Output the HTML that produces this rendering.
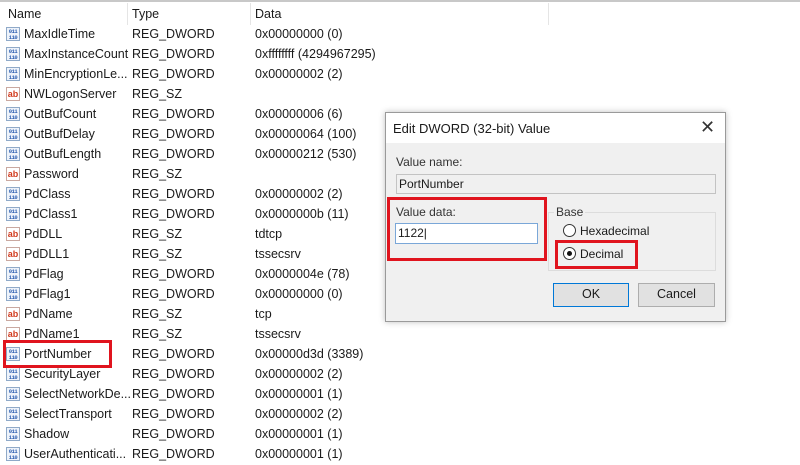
<!DOCTYPE html>
<html><head><style>
body{margin:0;width:800px;height:465px;background:#fff;position:relative;overflow:hidden;font-family:"Liberation Sans",sans-serif;font-size:12.5px;color:#1a1a1a}
.a{position:absolute;white-space:nowrap}
.hdr{position:absolute;top:0;left:0;width:800px;height:2px;background:#c8c8c8}
.sep{position:absolute;top:3px;width:1px;height:22px;background:#e5e5e5}
.row{position:absolute;left:0;height:20px;width:800px}
.row span{position:absolute;top:3px}
.ib{position:absolute;left:6px;top:3px;width:14px;height:14px;border:1px solid #8fa9c8;box-sizing:border-box;background:#eef3fa;font:bold 5.5px/5.5px "Liberation Mono",monospace;color:#2a5db0;text-align:center;padding-top:1px;letter-spacing:-0.5px}
.is{position:absolute;left:6px;top:3px;width:14px;height:14px;border:1px solid #c9a8a0;box-sizing:border-box;background:#fff;font:bold 9px/12px "Liberation Sans",sans-serif;color:#d23b1e;text-align:center}
.red{position:absolute;border:3px solid #e0141e;box-sizing:border-box}
.btn{position:absolute;background:#e1e1e1;border:1px solid #adadad;box-sizing:border-box;text-align:center;line-height:21px;font-size:12.5px}
</style></head><body>
<div class="hdr"></div>
<div class="sep" style="left:127px"></div><div class="sep" style="left:250px"></div><div class="sep" style="left:548px"></div>
<div class="a" style="left:8px;top:7px">Name</div>
<div class="a" style="left:132px;top:7px">Type</div>
<div class="a" style="left:255px;top:7px">Data</div>
<div id="rows"></div>
<script>
var d=[["b","MaxIdleTime","REG_DWORD","0x00000000 (0)"],["b","MaxInstanceCount","REG_DWORD","0xffffffff (4294967295)"],["b","MinEncryptionLe...","REG_DWORD","0x00000002 (2)"],["s","NWLogonServer","REG_SZ",""],["b","OutBufCount","REG_DWORD","0x00000006 (6)"],["b","OutBufDelay","REG_DWORD","0x00000064 (100)"],["b","OutBufLength","REG_DWORD","0x00000212 (530)"],["s","Password","REG_SZ",""],["b","PdClass","REG_DWORD","0x00000002 (2)"],["b","PdClass1","REG_DWORD","0x0000000b (11)"],["s","PdDLL","REG_SZ","tdtcp"],["s","PdDLL1","REG_SZ","tssecsrv"],["b","PdFlag","REG_DWORD","0x0000004e (78)"],["b","PdFlag1","REG_DWORD","0x00000000 (0)"],["s","PdName","REG_SZ","tcp"],["s","PdName1","REG_SZ","tssecsrv"],["b","PortNumber","REG_DWORD","0x00000d3d (3389)"],["b","SecurityLayer","REG_DWORD","0x00000002 (2)"],["b","SelectNetworkDe...","REG_DWORD","0x00000001 (1)"],["b","SelectTransport","REG_DWORD","0x00000002 (2)"],["b","Shadow","REG_DWORD","0x00000001 (1)"],["b","UserAuthenticati...","REG_DWORD","0x00000001 (1)"]];
var h="";d.forEach(function(r,i){var y=24+i*20;h+='<div class="row" style="top:'+y+'px">'+(r[0]=="b"?'<div class="ib">011<br>110</div>':'<div class="is">ab</div>')+'<span style="left:24px">'+r[1]+'</span><span style="left:132px">'+r[2]+'</span><span style="left:255px">'+r[3]+'</span></div>';});
document.getElementById("rows").innerHTML=h;
</script>
<div class="red" style="left:3px;top:340px;width:109px;height:28px"></div>
<!-- dialog -->
<div class="a" style="left:385px;top:112px;width:341px;height:210px;background:#f0f0f0;border:1px solid #9a9a9a;box-sizing:border-box;box-shadow:0 0 6px rgba(0,0,0,.25)"></div>
<div class="a" style="left:386px;top:113px;width:339px;height:30px;background:#fff"></div>
<div class="a" style="left:393px;top:121px;font-size:13px">Edit DWORD (32-bit) Value</div>
<div class="a" style="left:700px;top:117px;font-size:18px;color:#333">✕</div>
<div class="a" style="left:396px;top:155px;font-size:12px;color:#333">Value name:</div>
<div class="a" style="left:396px;top:174px;width:320px;height:20px;border:1px solid #c3c3c3;box-sizing:border-box;background:#f0f0f0;font-size:12px;line-height:18px;padding-left:2px">PortNumber</div>
<div class="a" style="left:396px;top:205px;font-size:12px;color:#333">Value data:</div>
<div class="a" style="left:395px;top:223px;width:143px;height:21px;border:1px solid #7aa7d8;box-sizing:border-box;background:#fff;font-size:12px;line-height:19px;padding-left:2px">1122|</div>
<div class="a" style="left:548px;top:212px;width:168px;height:59px;border:1px solid #dcdcdc;box-sizing:border-box"></div>
<div class="a" style="left:554px;top:205px;font-size:12px;color:#333;background:#f0f0f0;padding:0 2px">Base</div>
<div class="a" style="left:563px;top:224px;width:13px;height:13px;border:1px solid #333;border-radius:50%;background:#fff;box-sizing:border-box"></div>
<div class="a" style="left:580px;top:224px;font-size:12px">Hexadecimal</div>
<div class="a" style="left:563px;top:247px;width:13px;height:13px;border:1px solid #333;border-radius:50%;background:#fff;box-sizing:border-box"></div>
<div class="a" style="left:567px;top:251px;width:5px;height:5px;border-radius:50%;background:#111"></div>
<div class="a" style="left:580px;top:247px;font-size:12px">Decimal</div>
<div class="btn" style="left:553px;top:283px;width:76px;height:24px;border:1px solid #0078d7">OK</div>
<div class="btn" style="left:638px;top:283px;width:77px;height:24px">Cancel</div>
<div class="red" style="left:387px;top:197px;width:160px;height:64px"></div>
<div class="red" style="left:555px;top:240px;width:83px;height:29px"></div>
</body></html>
